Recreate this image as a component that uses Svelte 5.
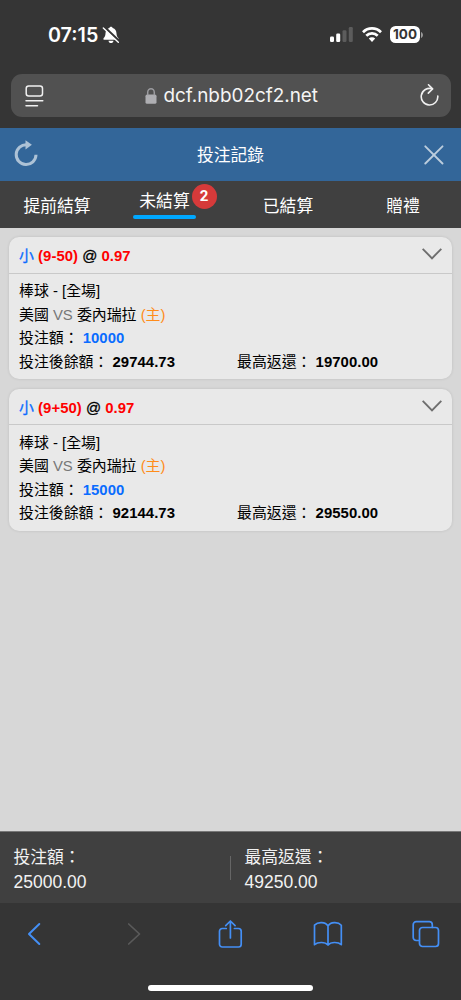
<script lang="ts">
  const tabs = [
    { label: '提前結算', count: 0 },
    { label: '未結算', count: 2 },
    { label: '已結算', count: 0 },
    { label: '贈禮', count: 0 },
  ];

  const bets = [
    { line: '(9-50)', odds: '0.97', stake: '10000', balance: '29744.73', payout: '19700.00' },
    { line: '(9+50)', odds: '0.97', stake: '15000', balance: '92144.73', payout: '29550.00' },
  ];

  let active = $state(1);
</script>

<div class="phone">
  <div class="status">
    <span class="time">07:15</span>
    <svg class="bell" viewBox="0 0 18 18">
      <path fill="#fff" d="M9 .8c.9 0 1.500.6 1.700 1.300 2.500.8 3.700 2.700 3.800 5.400.1 2.500.8 3.400 1.800 4.400.7.8.3 1.900-.7 1.900H2.400c-1 0-1.400-1.100-.7-1.900 1-1 1.700-1.900 1.800-4.400.1-2.700 1.300-4.600 3.800-5.400C7.500 1.400 8.100.8 9 .8zM6.500 14.700h5c-.2 1.500-1.200 2.300-2.500 2.300s-2.300-.8-2.500-2.300z" />
      <path stroke="#353535" stroke-width="2.400" d="M2.200.9l15 14.300" />
      <path stroke="#fff" stroke-width="1.400" stroke-linecap="round" d="M1.300 1.900l15 14.300" />
    </svg>
    <svg class="signal" viewBox="0 0 23 15">
      <rect x="0" y="9.500" width="4" height="5.500" rx="1.200" fill="#fff" />
      <rect x="6.200" y="6.500" width="4" height="8.500" rx="1.200" fill="#fff" />
      <rect x="12.500" y="3.300" width="4" height="11.700" rx="1.200" fill="#5c5c5c" />
      <rect x="18.800" y="0" width="4" height="15" rx="1.200" fill="#5c5c5c" />
    </svg>
    <svg class="wifi" viewBox="0 0 20 15" fill="none" stroke="#fff" stroke-width="2.700">
      <path d="M1 5.200a12.700 12.700 0 0 1 18 0" />
      <path d="M4.300 8.700a8 8 0 0 1 11.400 0" />
      <path fill="#fff" stroke="none" d="M10 14.900l-3.200-3.400a4.600 4.600 0 0 1 6.400 0z" />
    </svg>
    <span class="battery">100</span>
    <svg class="battery-tip" viewBox="0 0 2 6"><path fill="#999" d="M0 0c2.600 1 2.600 5 0 6z" /></svg>
  </div>

  <div class="address">
    <svg class="reader" viewBox="0 0 19 22" fill="none" stroke="#f0f0f0" stroke-width="1.500" stroke-linecap="round">
      <rect x="1.200" y="1" width="16.300" height="10" rx="2.500" />
      <path d="M1 15.800h16.800M1 20.700h11.500" />
    </svg>
    <div class="url">
      <svg class="lock" viewBox="0 0 12 16">
        <rect x="0.500" y="6.600" width="11" height="9.200" rx="1.600" fill="#aeaeb2" />
        <path fill="none" stroke="#9b9b9f" stroke-width="1.500" d="M2.700 7.200V4.400a3.300 3.600 0 0 1 6.600 0v2.800" />
      </svg>
      <span>dcf.nbb02cf2.net</span>
    </div>
    <svg class="reload" viewBox="0 0 20 24" fill="none" stroke="#f0f0f0" stroke-width="1.600" stroke-linecap="round" stroke-linejoin="round">
      <path d="M12.200 4.800A8.300 8.300 0 1 0 17.800 12" />
      <path d="M8.500 .8l4.100 4.100-4.300 4.200" />
    </svg>
  </div>

  <header>
    <svg class="refresh" viewBox="0 0 24 28">
      <path fill="none" stroke="#adc2d6" stroke-width="3" d="M13 4.800A9.900 9.900 0 1 0 22 14.800" />
      <path fill="#adc2d6" d="M11.500 0.200l6.400 4.600-6.400 4.600z" />
    </svg>
    <h1>投注記錄</h1>
    <svg class="close" viewBox="0 0 20 20" stroke="#bccddd" stroke-width="1.900" stroke-linecap="round">
      <path d="M1.300 1.300l17.200 17.200M18.500 1.300L1.300 18.500" />
    </svg>
  </header>

  <nav>
    {#each tabs as tab, i}
      <button class:active={active === i} onclick={() => (active = i)}>
        <span class="label">
          {tab.label}
          {#if tab.count}
            <span class="badge">{tab.count}</span>
          {/if}
        </span>
      </button>
    {/each}
  </nav>

  <main>
    {#each bets as bet}
      <section class="card">
        <div class="card-head">
          <div>
            <span class="pick">小</span>
            <b class="red">{bet.line}</b>
            <span class="at">@</span>
            <b class="red">{bet.odds}</b>
          </div>
          <svg class="chevron" viewBox="0 0 20 12" fill="none" stroke="#6e6e6e" stroke-width="1.900">
            <path d="M0.700 0.800L10 10.300l9.300-9.500" />
          </svg>
        </div>
        <div class="card-body">
          <div>棒球 - [全場]</div>
          <div>美國 <span class="vs">VS</span> 委內瑞拉 <span class="home">(主)</span></div>
          <div>投注額： <b class="blue">{bet.stake}</b></div>
          <div class="split">
            <span>投注後餘額： <b>{bet.balance}</b></span>
            <span>最高返還： <b>{bet.payout}</b></span>
          </div>
        </div>
      </section>
    {/each}
  </main>

  <div class="totals">
    <div class="total"><div>投注額：</div><div class="sum">25000.00</div></div>
    <div class="divider"></div>
    <div class="total"><div>最高返還：</div><div class="sum">49250.00</div></div>
  </div>

  <footer>
    <div class="toolbar">
      <svg viewBox="0 0 30 30"><path d="M20.300 5L10 15l10.300 10" stroke-width="2" /></svg>
      <svg class="off" viewBox="0 0 30 30"><path d="M11.700 5L22.500 15 11.700 25" /></svg>
      <svg viewBox="0 0 30 30">
        <path d="M11.300 9.500H7.200a2.700 2.700 0 0 0-2.700 2.700v13.100A2.700 2.700 0 0 0 7.200 28h16.300a2.700 2.700 0 0 0 2.700-2.700V12.200a2.700 2.700 0 0 0-2.700-2.700h-4.100M15.400 19V2M10.700 6.600L15.400 2l4.700 4.600" />
      </svg>
      <svg viewBox="0 0 30 30">
        <path d="M15 7v18.500M15 7C12.500 2.800 5 2.600 1.500 6.200V25.700C5 22.700 12 22.700 15 26c3-3.300 10-3.300 13.300-.3V6.200C25 2.600 17.500 2.800 15 7z" />
      </svg>
      <svg viewBox="0 0 30 30">
        <rect x="8.500" y="8.500" width="19" height="19" rx="3" />
        <path d="M8.300 21.500H5.200a3 3 0 0 1-3-3V5.700a3 3 0 0 1 3-3h13.100a3 3 0 0 1 3 3v2.600" />
      </svg>
    </div>
    <div class="home-bar"></div>
  </footer>
</div>

<style>
  :global(body) {
    margin: 0;
    background: #353535;
  }

  .phone {
    display: flex;
    flex-direction: column;
    width: 461px;
    height: 1000px;
    overflow: hidden;
    background: #353535;
    font-family: "Liberation Sans", "Noto Sans CJK TC", sans-serif;
  }

  svg {
    display: block;
    flex: none;
  }

  .status {
    display: flex;
    align-items: center;
    box-sizing: border-box;
    height: 74px;
    padding: 0 38px 5px 48px;
    color: #fff;
    font-family: Inter, sans-serif;
  }

  .time {
    width: 54px;
    font-size: 19.7px;
    font-weight: 600;
  }

  .bell {
    width: 18px;
    height: 18px;
  }

  .signal {
    width: 23px;
    height: 15px;
    margin-left: auto;
  }

  .wifi {
    width: 20px;
    height: 15px;
    margin-left: 9px;
  }

  .battery {
    width: 30px;
    height: 17px;
    margin-left: 8px;
    border-radius: 5.5px;
    background: #fff;
    color: #353535;
    font-size: 13.5px;
    font-weight: 700;
    line-height: 17px;
    text-align: center;
  }

  .battery-tip {
    width: 2px;
    height: 6px;
    margin-left: 1px;
  }

  .address {
    display: flex;
    align-items: center;
    justify-content: space-between;
    box-sizing: border-box;
    height: 43px;
    margin: 0 10px 11px 11px;
    padding: 0 11px 0 14px;
    border-radius: 11px;
    background: #515151;
  }

  .reader {
    width: 19px;
    height: 22px;
  }

  .url {
    display: flex;
    align-items: center;
    gap: 6.5px;
    margin-right: 1px;
    color: #f5f5f5;
    font-family: Inter, sans-serif;
    font-size: 18.9px;
  }

  .lock {
    width: 12px;
    height: 16px;
  }

  .reload {
    width: 20px;
    height: 24px;
  }

  header {
    display: flex;
    align-items: center;
    justify-content: space-between;
    box-sizing: border-box;
    height: 53px;
    padding: 0 17px 0 14px;
    background: #336699;
    color: #fff;
  }

  h1 {
    margin: 0 1px 1px 0;
    font-size: 16.8px;
    font-weight: 400;
  }

  .refresh {
    width: 24px;
    height: 28px;
    margin-bottom: 2px;
  }

  .close {
    width: 20px;
    height: 20px;
  }

  nav {
    display: grid;
    grid-template-columns: 114px 101px 146px 84px;
    height: 47px;
    background: #404040;
  }

  button {
    display: flex;
    align-items: center;
    justify-content: center;
    padding: 4px 0 0;
    border: 0;
    background: none;
    color: #fff;
    font: inherit;
    font-size: 16.8px;
    cursor: pointer;
  }

  .label {
    position: relative;
    line-height: 26px;
  }

  .active {
    padding: 0 0 5px;
  }

  .active .label {
    padding: 0 6px;
  }

  .active .label::after {
    position: absolute;
    right: 0;
    bottom: -4px;
    left: 0;
    height: 4px;
    border-radius: 2px;
    background: #00a8ff;
    content: "";
  }

  .badge {
    position: absolute;
    top: -5px;
    right: -21px;
    width: 25px;
    height: 25px;
    border-radius: 50%;
    background: #d63a3a;
    font-family: Roboto, sans-serif;
    font-size: 15px;
    font-weight: 700;
    line-height: 25px;
    text-align: center;
  }

  main {
    display: flex;
    flex: 1;
    flex-direction: column;
    gap: 9.3px;
    padding: 9.2px 9px 0;
    background: #d7d7d7;
  }

  .card {
    box-sizing: border-box;
    height: 142.3px;
    border-radius: 10px;
    background: #e9e9e9;
    box-shadow: 0 0 3px rgba(0, 0, 0, 0.12);
    color: #000;
    font-size: 14.9px;
  }

  .card-head {
    display: flex;
    align-items: center;
    justify-content: space-between;
    box-sizing: border-box;
    height: 36.5px;
    padding: 0 10px 1px;
    border-bottom: 1px solid #c9c9c9;
  }

  .card-body {
    padding: 6.5px 10px 0;
    line-height: 23.5px;
  }

  .card b {
    letter-spacing: 0.05px;
  }

  .pick,
  .blue {
    color: #0a6cff;
  }

  .pick {
    -webkit-text-stroke: 0.3px #0a6cff;
  }

  .red {
    color: #f00;
  }

  .at {
    -webkit-text-stroke: 0.3px #000;
  }

  .chevron {
    width: 20px;
    height: 12px;
  }

  .vs {
    color: #777;
  }

  .home {
    color: #ff8c1a;
  }

  .split {
    display: grid;
    grid-template-columns: 218px 1fr;
  }

  .totals {
    display: flex;
    align-items: center;
    box-sizing: border-box;
    height: 72px;
    border-top: 1px solid #777;
    background: #404040;
    color: #f2f2f2;
    font-size: 16.8px;
    line-height: 24px;
  }

  .total {
    flex: 1;
    padding: 4px 0 0 13.5px;
  }

  .sum {
    font-size: 17.5px;
  }

  .divider {
    width: 1px;
    height: 24px;
    background: #666;
  }

  footer {
    display: flex;
    flex-direction: column;
    align-items: center;
    justify-content: space-between;
    box-sizing: border-box;
    height: 97px;
    padding: 16px 20px 9px 19px;
    background: #353535;
  }

  .toolbar {
    display: flex;
    justify-content: space-between;
    width: 100%;
    fill: none;
    stroke: #448ff5;
    stroke-width: 1.7;
    stroke-linecap: round;
    stroke-linejoin: round;
  }

  .toolbar svg {
    width: 30px;
    height: 30px;
  }

  .off {
    stroke: #5a5a5a;
  }

  .home-bar {
    width: 165px;
    height: 6px;
    border-radius: 3px;
    background: #fff;
  }
</style>
